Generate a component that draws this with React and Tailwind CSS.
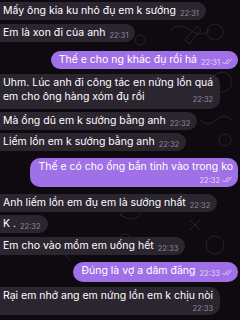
import React from "react";

const font = { fontFamily: 'Inter, "Liberation Sans", Arial, sans-serif' };

const Ticks = () => (
  <svg width="11" height="7" viewBox="0 0 11 7" className="inline ml-[2px] align-baseline">
    <path d="M0.5 4 L2.5 6 L6.5 1" stroke="currentColor" strokeWidth="0.9" fill="none" />
    <path d="M4.5 5.5 L5 6 L9.5 1" stroke="currentColor" strokeWidth="0.9" fill="none" />
  </svg>
);

const InTime = ({ t }) => (
  <span className="text-[7.5px] leading-none text-[#8f8797] ml-[4px] relative top-[2px]">{t}</span>
);

const OutTime = ({ t }) => (
  <span className="text-[7.5px] leading-none text-[#e4d6ff] ml-[4px] relative top-[2px] whitespace-nowrap">
    {t}
    <Ticks />
  </span>
);

const Incoming = ({ children, className = "" }) => (
  <div className={`self-start bg-[#2b2530] text-white rounded-r-[10px] pl-[3px] pr-[7px] py-[2px] leading-[14px] ${className}`}>
    {children}
  </div>
);

const Outgoing = ({ children, className = "" }) => (
  <div className={`self-end mr-[2px] bg-[#a071e6] text-white rounded-[10px] pl-[8px] pr-[5px] py-[2px] leading-[14px] ${className}`}>
    {children}
  </div>
);

const Doodles = () => (
  <svg className="absolute inset-0" width="240" height="320" viewBox="0 0 240 320">
    <g stroke="#2a2030" strokeWidth="1" fill="none">
      <circle cx="215" cy="32" r="8" />
      <path d="M170 30 q10 -8 20 0 t20 0" />
      <path d="M185 40 l12 -14 l4 4 l-12 14 z" />
      <circle cx="140" cy="40" r="5" />
      <circle cx="222" cy="82" r="10" />
      <path d="M200 120 q8 8 16 0 q8 -8 16 0" />
      <circle cx="225" cy="140" r="6" />
      <path d="M120 215 q10 -12 22 -4 q-6 14 -22 4z" />
      <circle cx="125" cy="240" r="6" />
      <path d="M190 220 l10 10 m0 -10 l-10 10" />
      <circle cx="215" cy="245" r="9" />
      <path d="M40 255 q20 -10 30 5" />
      <circle cx="30" cy="300" r="5" />
      <circle cx="210" cy="300" r="7" />
      <path d="M140 280 q10 -8 20 0" />
    </g>
  </svg>
);

export default function App() {
  return (
    <div className="relative w-[240px] h-[320px] overflow-hidden bg-[#0e0a10]" style={font}>
      <Doodles />
      <div className="relative flex flex-col pt-[2px] text-[10.5px]">
        <Incoming>
          Mấy ông kia ku nhỏ đụ em k sướng<InTime t="22:31" />
        </Incoming>
        <Incoming className="mt-[4px]">
          Em là xon đi của anh<InTime t="22:31" />
        </Incoming>
        <Outgoing className="mt-[9px]">
          Thế e cho ng khác đụ rồi hả<OutTime t="22:31" />
        </Outgoing>
        <Incoming className="mt-[5px] pb-[5px]">
          <div className="whitespace-nowrap">Uhm. Lúc anh đi công tác en nứng lồn quá</div>
          <div className="flex items-end">
            <span>em cho ông hàng xóm đụ rồi</span>
            <span className="ml-auto">
              <InTime t="22:32" />
            </span>
          </div>
        </Incoming>
        <Incoming className="mt-[3px]">
          Mà ổng dũ em k sướng bằng anh<InTime t="22:32" />
        </Incoming>
        <Incoming className="mt-[3px]">
          Liếm lồn em k sướng bằng anh<InTime t="22:32" />
        </Incoming>
        <Outgoing className="mt-[7px] pb-[4px]">
          <div className="whitespace-nowrap">Thế e có cho ổng bắn tinh vào trong ko</div>
          <div className="flex justify-end leading-[10px]">
            <OutTime t="22:32" />
          </div>
        </Outgoing>
        <Incoming className="mt-[7px]">
          Anh liếm lồn em đụ em là sướng nhất<InTime t="22:32" />
        </Incoming>
        <Incoming className="mt-[3px]">
          K .<InTime t="22:32" />
        </Incoming>
        <Incoming className="mt-[4px]">
          Em cho vào mồm em uống hết<InTime t="22:33" />
        </Incoming>
        <Outgoing className="mt-[7px] pb-[4px]">
          Đúng là vợ a dâm đăng<OutTime t="22:33" />
        </Outgoing>
        <Incoming className="mt-[5px] pb-[5px]">
          <div className="whitespace-nowrap">Rại em nhớ ang em nứng lồn em k chịu nòi</div>
          <div className="flex justify-end leading-[10px]">
            <InTime t="22:33" />
          </div>
        </Incoming>
      </div>
    </div>
  );
}
